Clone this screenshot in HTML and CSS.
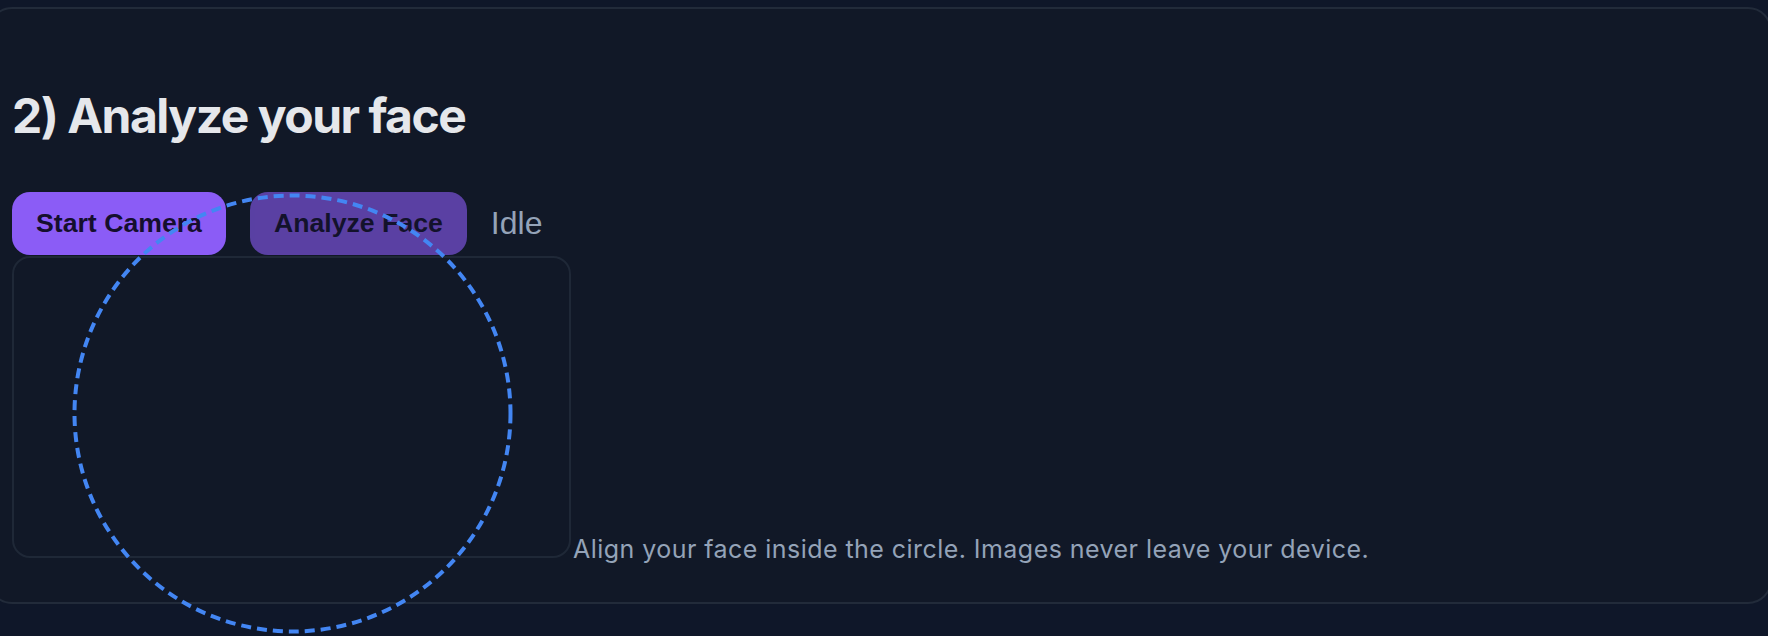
FILE: index.html
```html
<!DOCTYPE html>
<html lang="en">
<head>
<meta charset="utf-8">
<title>Analyze your face</title>
<link rel="stylesheet" href="styles.css">
</head>
<body>
  <section class="panel">
    <h2 class="title">2) Analyze your face</h2>
    <div class="controls">
      <button class="btn btn-primary" type="button">Start Camera</button>
      <button class="btn btn-primary" type="button" disabled>Analyze Face</button>
      <span class="status">Idle</span>
    </div>
    <div class="stage">
      <div class="video"></div><span class="hint">Align your face inside the circle. Images never leave your device.</span>
      <svg class="guide" width="441" height="441" viewBox="0 0 441 441" aria-hidden="true">
        <circle cx="220.5" cy="220.5" r="218" fill="none" stroke="#4386f3" stroke-width="4" stroke-dasharray="10 6"/>
      </svg>
    </div>
  </section>
</body>
</html>
```

FILE: styles.css
```css
html, body {
  margin: 0;
  padding: 0;
}

html {
  min-height: 100%;
  overflow: visible;
}

body {
  min-height: 100vh;
  overflow: visible;
  background: #0f1729;
  font-family: Inter, "Noto Sans", sans-serif;
  color: #e5e7eb;
}

.panel {
  margin: 7px -4px 0 -12px;
  padding: 30px 22px 38px;
  background: #111827;
  border: 2px solid #222b3a;
  border-radius: 24px;
  overflow: visible;
}

.title {
  margin: 48px 0 47px;
  font-family: Inter, sans-serif;
  font-weight: 700;
  font-size: 48px;
  line-height: 58px;
  letter-spacing: -1.5px;
  color: #e5e7eb;
}

.controls {
  display: flex;
  align-items: center;
  gap: 24px;
}

.btn {
  height: 63px;
  padding: 0 24px;
  border: none;
  border-radius: 18px;
  font-family: "Liberation Sans", Arial, sans-serif;
  font-weight: 700;
  font-size: 26.67px;
  cursor: pointer;
}

.btn-primary {
  background: #8b5cf6;
  color: #150f2e;
}

.btn-primary:disabled {
  opacity: 0.6;
  cursor: default;
}

.status {
  font-family: "Liberation Sans", Arial, sans-serif;
  font-size: 32px;
  color: #94a3b8;
}

.stage {
  position: relative;
  margin-top: 1px;
  overflow: visible;
}

.video {
  display: inline-block;
  width: 555px;
  height: 298px;
  border: 2px solid #1f2837;
  border-radius: 18px;
  background: #111827;
}

.hint {
  margin-left: 2px;
  font-family: Inter, sans-serif;
  font-size: 25px;
  letter-spacing: 0.45px;
  color: #94a3b8;
}

.guide {
  position: absolute;
  left: 60px;
  top: -63px;
  overflow: visible;
  pointer-events: none;
}
```
